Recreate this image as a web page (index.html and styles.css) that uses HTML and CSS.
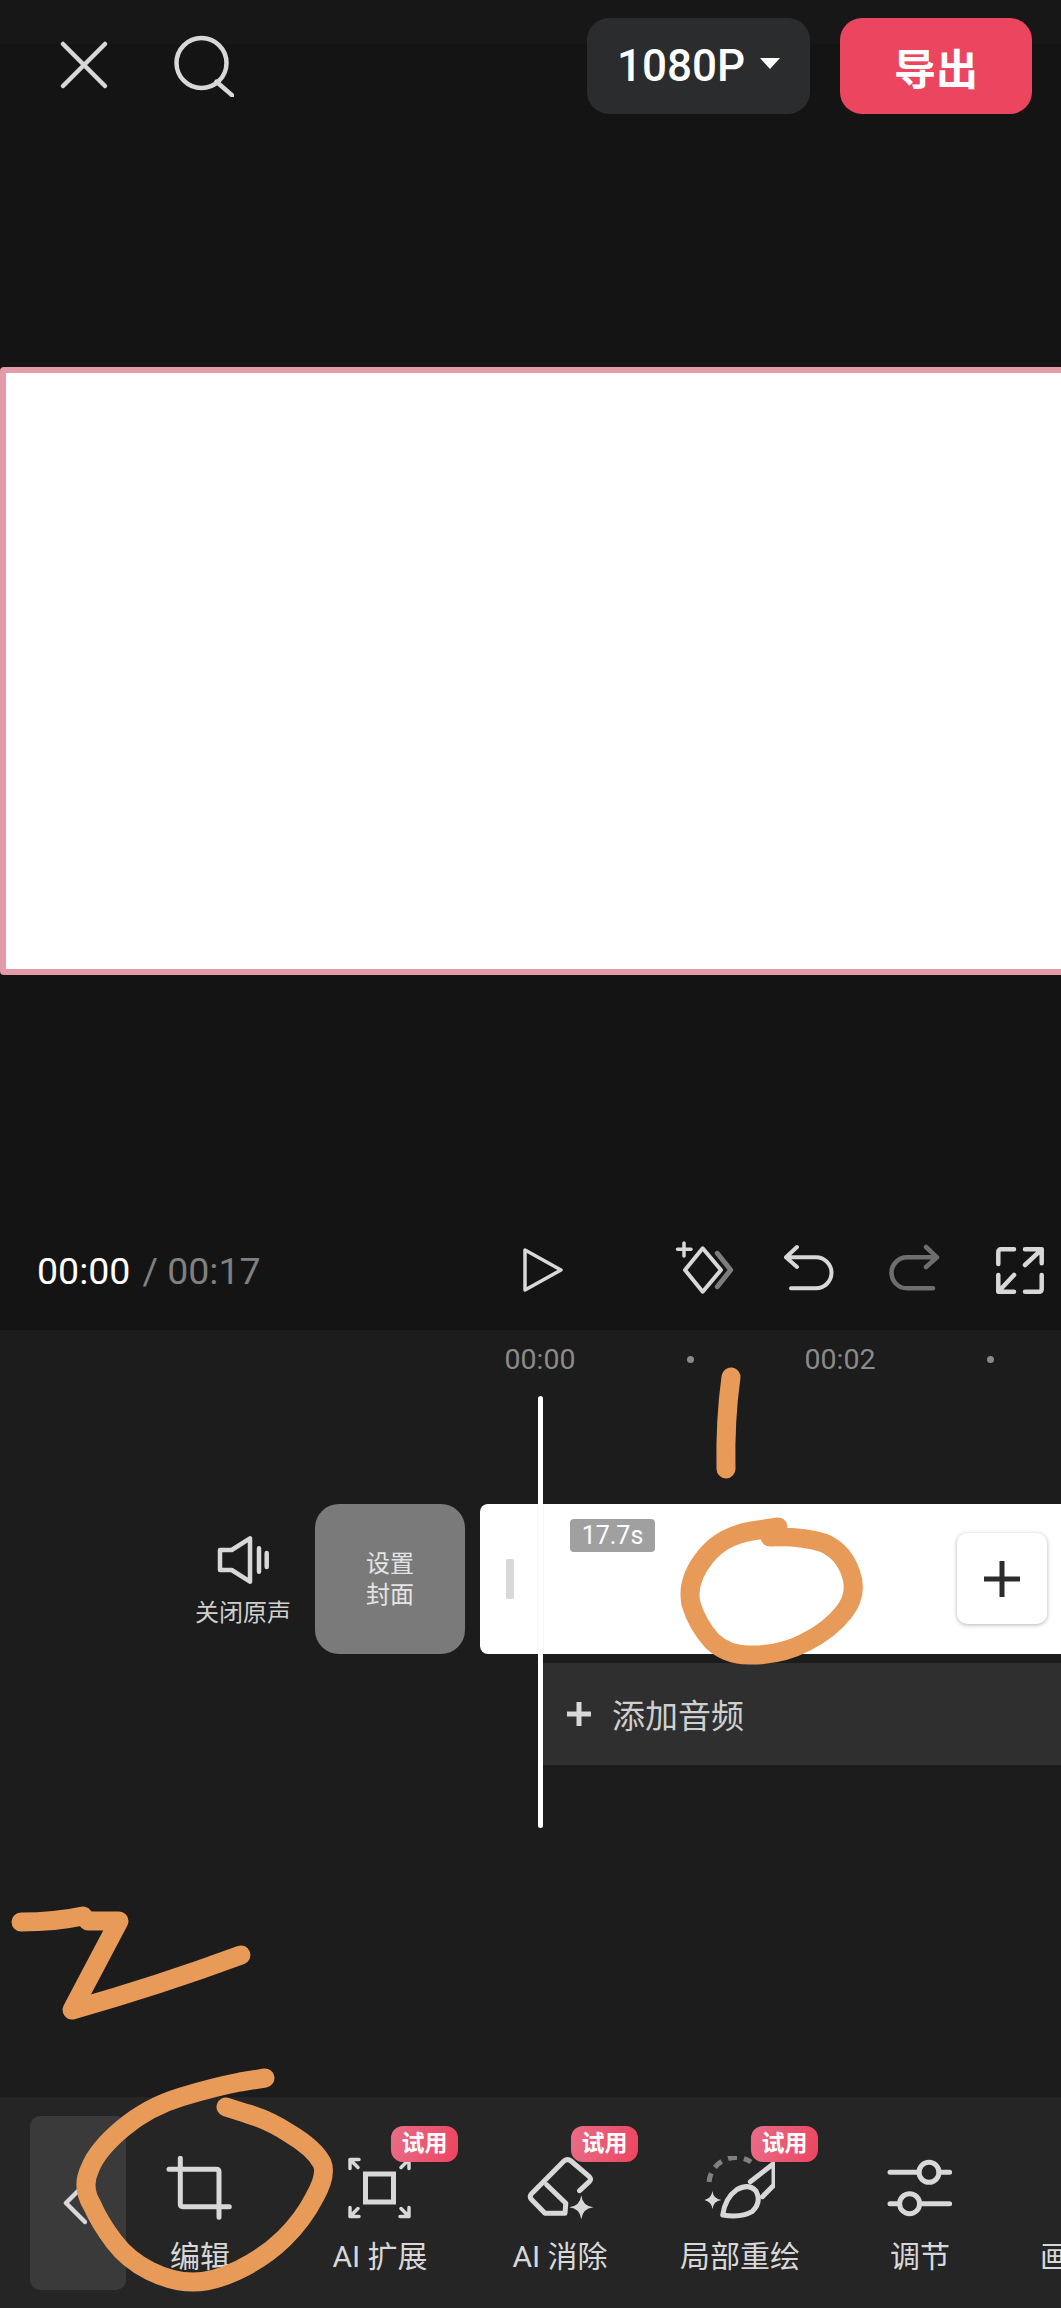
FILE: index.html
```html
<!DOCTYPE html>
<html lang="zh-CN">
<head>
<meta charset="utf-8">
<title>视频编辑</title>
<link rel="stylesheet" href="styles.css">
</head>
<body>
<div class="app">
  <header class="topbar">
    <svg class="ico ico-close" width="50" height="50" viewBox="0 0 50 50"><path d="M4 4L46 46M46 4L4 46"/></svg>
    <svg class="ico ico-search" width="60" height="62" viewBox="0 0 60 62"><circle cx="27.5" cy="28" r="25"/><path d="M42.5 46.7L59 61"/></svg>
    <div class="res-btn"><span>1080P</span><i class="caret"></i></div>
    <div class="export-btn">导出</div>
  </header>

  <section class="preview"></section>

  <section class="controls">
    <div class="time"><span class="time-now">00:00</span><span class="time-total">/ 00:17</span></div>
    <svg class="ico ico-play" width="40" height="44" viewBox="0 0 40 44"><path d="M2 2L38 22L2 42Z"/></svg>
    <svg class="ico ico-key" width="60" height="55" viewBox="0 0 60 55"><path d="M27.7 8.3L46 30L27.7 51.7L10 30Z"/><path class="thin" d="M2.5 9.3H16M9 3V16"/><path class="dim" d="M42.3 13.3L55.7 30L42.3 46.7"/></svg>
    <svg class="ico ico-undo" width="55" height="55" viewBox="0 0 55 55"><path d="M17 7L6 17.3L17 27M6 17.3H36A15.5 15.5 0 0 1 36 48.3H11"/></svg>
    <svg class="ico ico-redo dim-all" width="55" height="55" viewBox="0 0 55 55"><path d="M41 7L52 17.3L41 27M52 17.3H22A15.5 15.5 0 0 0 22 48.3H48"/></svg>
    <svg class="ico ico-full" width="50" height="55" viewBox="0 0 50 55"><path d="M19 9.3H6Q3.300 9.300 3.300 12V24M30 9.300H46.700V23.300M46.700 9.300L30 25M3.300 35V51.700H19M3.300 51.700L19 35M30 51.700H44Q46.700 51.700 46.700 49V35"/></svg>
  </section>

  <section class="timeline">
    <div class="ruler">
      <span class="tick">00:00</span>
      <span class="tick"><i class="dot"></i></span>
      <span class="tick">00:02</span>
      <span class="tick"><i class="dot"></i></span>
    </div>
    <div class="track">
      <div class="mute">
        <svg class="ico ico-speaker" width="60" height="60" viewBox="-2 0 60 60"><path d="M5 20H16.700L35 8.300V51.700L16.700 40H5Z"/><path d="M44 18.300V41.700M51.700 23V37"/></svg>
        <span class="mute-label">关闭原声</span>
      </div>
      <div class="cover"><span class="cover-text">设置<br>封面</span></div>
      <div class="clip">
        <i class="clip-handle"></i>
        <span class="clip-time">17.7s</span>
        <div class="clip-add">
          <svg class="ico-plus" width="36" height="36" viewBox="0 0 36 36"><path d="M0 18H36M18 0V36"/></svg>
        </div>
      </div>
    </div>
    <div class="audio">
      <svg class="ico-audio-plus" width="24" height="24" viewBox="0 0 24 24"><path d="M0 12H24M12 0V24"/></svg>
      <span>添加音频</span>
    </div>
    <i class="playhead"></i>
  </section>

  <nav class="toolbar">
    <div class="back">
      <svg class="ico ico-back" width="24" height="44" viewBox="0 0 24 44"><path d="M22 3L3 22L22 41"/></svg>
    </div>
    <div class="tool">
      <svg class="ico" width="70" height="64" viewBox="0 0 70 64"><path d="M15.300 2.300V48Q15.300 50.700 18 50.700H64.300M4 13.300H51.300Q54 13.300 54 16V61.300"/></svg>
      <span class="tool-label">编辑</span>
    </div>
    <div class="tool">
      <svg class="ico ico-thin" width="70" height="64" viewBox="0 0 70 64"><rect x="20.500" y="18" width="28" height="28"/><path d="M14 3.500H5V12.500M5 3.500L13 11.500M55 3.500H64V12.500M64 3.500L56 11.500M5 51.500V60.500H14M5 60.500L13 52.500M55 60.500H64V51.500M64 60.500L56 52.500"/></svg>
      <span class="tool-label">AI 扩展</span>
      <span class="trial">试用</span>
    </div>
    <div class="tool">
      <svg class="ico" width="70" height="64" viewBox="0 0 70 64"><path d="M54.600 34.700L64.300 25.700Q66.700 23.300 64.300 20.700L46 5Q42.600 2.300 39 5L6.300 38Q4.300 40.700 6.300 43.300L20 57.300H40L40.800 47.300L21.900 29"/><path class="solid" d="M56.300 39.300Q57.500 50 68.300 51.300Q57.500 52.600 56.300 63.300Q55 52.600 44.300 51.300Q55 50 56.300 39.300Z"/></svg>
      <span class="tool-label">AI 消除</span>
      <span class="trial">试用</span>
    </div>
    <div class="tool">
      <svg class="ico" width="70" height="64" viewBox="0 0 70 64"><path class="dashed" d="M4 26A27 27 0 0 1 46 6"/><path class="solid" d="M7.400 35Q8.400 43 16.400 44Q8.400 45 7.400 53Q6.400 45 -1.600 44Q6.400 43 7.400 35Z"/><path d="M17.700 59Q20 42 32 33.500Q44 27 51 35Q57 46 47 55.700Q36 62 17.700 59Z"/><path d="M45.300 25.700L69 7.300V29L57.400 40.700"/></svg>
      <span class="tool-label">局部重绘</span>
      <span class="trial">试用</span>
    </div>
    <div class="tool">
      <svg class="ico" width="70" height="64" viewBox="0 0 70 64"><path d="M5 16.300H34M54 16.300H64.600M5 47.700H14.600M34.600 47.700H64.600"/><circle cx="44" cy="16.300" r="10"/><circle cx="24.600" cy="47.700" r="10"/></svg>
      <span class="tool-label">调节</span>
    </div>
    <div class="tool">
      <svg class="ico" width="70" height="64" viewBox="0 0 70 64"></svg>
      <span class="tool-label">画质提升</span>
    </div>
  </nav>

  <svg class="scribble" width="1061" height="2308" viewBox="0 0 1061 2308">
    <path d="M731 1377Q725 1420 726 1469"/>
    <path d="M778 1527L752 1531Q722 1536 706 1556Q686 1580 691 1604Q697 1624 712 1641Q728 1656 752 1655Q782 1655 806 1642Q830 1630 844 1612Q858 1594 851 1574Q844 1552 824 1543Q804 1536 770 1537"/>
    <path d="M21 1922Q55 1922 83 1916M88 1921H119L72 2010Q160 1985 241 1955"/>
    <path d="M265 2078L240 2082Q214 2087 181 2097Q148 2107 122.500 2128.500Q97 2150 90 2168.500Q81 2187 92 2205Q100 2223 114 2241.500Q128 2260 150 2271Q172 2282 193 2282Q214 2282 239.500 2269.500Q265 2257 284 2238.500Q303 2220 315 2196.500Q327 2175 322 2163Q314 2148 289.500 2133.500Q269 2120 246.500 2113.500L226 2107"/>
  </svg>
</div>
</body>
</html>
```

FILE: styles.css
```css
* { box-sizing: border-box; }

html, body {
  margin: 0;
  padding: 0;
  background: #141414;
}

.app {
  position: relative;
  width: 1061px;
  height: 2308px;
  overflow: hidden;
  display: flex;
  flex-direction: column;
  font-family: Roboto, "Noto Sans CJK SC", sans-serif;
  color: #d8d8d8;
}

.ico {
  flex: none;
  display: block;
  fill: none;
  stroke: #d8d8d8;
  stroke-width: 5;
  stroke-linecap: round;
  stroke-linejoin: round;
}

/* top bar */
.topbar {
  flex: none;
  height: 367px;
  display: flex;
  align-items: flex-start;
  padding: 18px 29px 0 59px;
  background: linear-gradient(#171717 44px, #141414 44px);
}

.ico-close { margin-top: 22px; stroke-width: 4.500; }
.ico-search { margin: 17px 0 0 65px; stroke-width: 4.500; }

.res-btn {
  margin-left: auto;
  width: 223px;
  height: 96px;
  border-radius: 22px;
  background: #2a2c2e;
  color: #fff;
  display: flex;
  align-items: center;
  justify-content: center;
  gap: 15px;
  font-size: 44px;
  font-weight: 500;
}

.caret {
  width: 0;
  height: 0;
  margin-bottom: 6px;
  border-left: 10px solid transparent;
  border-right: 10px solid transparent;
  border-top: 11px solid #fff;
}

.export-btn {
  margin-left: 30px;
  width: 192px;
  height: 96px;
  border-radius: 22px;
  background: #eb4560;
  color: #fff;
  display: flex;
  align-items: center;
  justify-content: center;
  font-size: 42px;
  font-weight: 700;
}

/* preview */
.preview {
  flex: none;
  height: 608px;
  width: 1080px;
  background: #fff;
  border: 6px solid #e49aa7;
  border-radius: 4px;
}

/* playback controls */
.controls {
  flex: none;
  height: 355px;
  display: flex;
  align-items: flex-start;
  padding: 265px 0 0 37px;
}

.time {
  flex: none;
  width: 486px;
  margin-top: 8px;
  font-size: 37.500px;
  line-height: 46px;
  color: #fff;
}

.time-total {
  margin-left: 12px;
  color: #808080;
}

.ico-play { margin-top: 8px; stroke-width: 3.500; }
.ico-key { margin: 0 0 0 112px; stroke-width: 4; }
.ico-key .thin { stroke-width: 3.500; }
.ico-key .dim { stroke: #7c7c7c; stroke-width: 5; }
.ico-undo { margin-left: 45px; stroke-width: 4; }
.ico-redo { margin-left: 50px; stroke-width: 4.500; stroke: #6e6e6e; }
.ico-full { margin-left: 55px; stroke-width: 4.500; }

/* timeline */
.timeline {
  position: relative;
  flex: none;
  height: 767px;
  background: #1c1c1c;
}

.ruler {
  height: 58px;
  padding-left: 465px;
  display: flex;
  align-items: center;
}

.tick {
  flex: none;
  width: 150px;
  display: flex;
  justify-content: center;
  align-items: center;
  font-size: 28.500px;
  color: #8a8a8a;
}

.dot {
  width: 7px;
  height: 7px;
  border-radius: 50%;
  background: #8a8a8a;
}

.track {
  display: flex;
  align-items: stretch;
  margin-top: 116px;
  height: 150px;
  padding-left: 195px;
}

.mute {
  flex: none;
  width: 96px;
  padding-top: 26px;
  display: flex;
  flex-direction: column;
  align-items: center;
}

.ico-speaker { stroke-width: 4.500; }

.mute-label {
  margin-top: 6px;
  font-size: 24px;
  line-height: 34px;
  white-space: nowrap;
  color: #cfcfcf;
}

.cover {
  flex: none;
  width: 150px;
  margin-left: 24px;
  border-radius: 24px;
  background: #7a7a7a;
  color: #e4e4e4;
  font-size: 24px;
  line-height: 31px;
  text-align: center;
  display: flex;
  align-items: center;
  justify-content: center;
}

.cover-text { padding-top: 2px; }

.clip {
  flex: 1;
  margin-left: 15px;
  background: #fff;
  border-radius: 8px 0 0 8px;
  display: flex;
  align-items: flex-start;
  padding-left: 26px;
}

.clip-handle {
  flex: none;
  width: 8px;
  height: 40px;
  margin-top: 55px;
  border-radius: 2px;
  background: #d8d8d8;
}

.clip-time {
  flex: none;
  width: 85px;
  height: 33px;
  margin: 15px 0 0 56px;
  border-radius: 4px;
  background: #a0a0a0;
  color: #fff;
  font-size: 25px;
  line-height: 33px;
  text-align: center;
}

.clip-add {
  flex: none;
  width: 90px;
  height: 91px;
  margin: 29px 14px 0 auto;
  border-radius: 10px;
  background: #fff;
  box-shadow: 0 1px 4px rgba(0, 0, 0, .3);
  display: flex;
  align-items: center;
  justify-content: center;
}

.ico-plus {
  fill: none;
  stroke: #2c2c2c;
  stroke-width: 5;
}

.audio {
  height: 102px;
  margin: 9px 0 0 543px;
  padding-left: 24px;
  background: #2f2f2f;
  display: flex;
  align-items: center;
  gap: 21px;
  font-size: 33px;
  color: #cfcfcf;
}

.ico-audio-plus {
  flex: none;
  fill: none;
  stroke: #d8d8d8;
  stroke-width: 5;
}

.playhead {
  position: absolute;
  left: 538px;
  top: 66px;
  width: 5px;
  height: 432px;
  border-radius: 3px;
  background: #fff;
  box-shadow: 0 0 1px rgba(0, 0, 0, .35);
}

/* bottom toolbar */
.toolbar {
  flex: none;
  height: 211px;
  display: flex;
  align-items: flex-start;
  gap: 64px;
  padding: 19px 0 0 30px;
  background: #252525;
  overflow: hidden;
}

.back {
  flex: none;
  width: 96px;
  height: 174px;
  margin-right: -48px;
  border-radius: 10px;
  background: #3a3a3a;
  display: flex;
  align-items: center;
  justify-content: center;
}

.ico-back { margin-right: 6px; stroke-width: 4.500; }

.tool {
  position: relative;
  flex: none;
  width: 116px;
  padding-top: 40px;
  display: flex;
  flex-direction: column;
  align-items: center;
}

.ico-thin { stroke-width: 3.500; }
.tool .ico rect { stroke-width: 5; stroke-linejoin: miter; }
.tool .solid { fill: #d8d8d8; stroke: none; }
.tool .dashed { stroke: #808080; stroke-linecap: butt; stroke-dasharray: 9 7; }

.tool-label {
  margin-top: 17px;
  font-size: 30px;
  line-height: 40px;
  white-space: nowrap;
  color: #d8d8d8;
}

.trial {
  position: absolute;
  left: 69px;
  top: 10px;
  width: 67px;
  height: 36px;
  border-radius: 12px;
  background: linear-gradient(100deg, #e96c87, #ec4560);
  color: #fff;
  font-size: 23px;
  font-weight: 700;
  line-height: 36px;
  text-align: center;
}

/* hand-drawn annotation over the screenshot */
.scribble {
  position: absolute;
  left: 0;
  top: 0;
  pointer-events: none;
  fill: none;
  stroke: #e89a58;
  stroke-width: 19;
  stroke-linecap: round;
  stroke-linejoin: round;
}
```
